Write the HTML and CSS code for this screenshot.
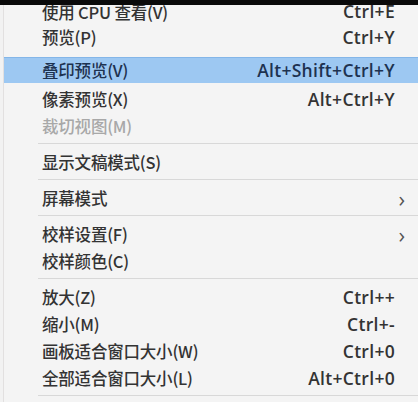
FILE: index.html
```html
<!DOCTYPE html>
<html lang="zh-CN">
<head>
<meta charset="utf-8">
<link rel="stylesheet" href="styles.css">
</head>
<body>
<div class="topbar"></div>
<div class="menu">
  <div class="item first"><span class="label">使用 CPU 查看(V)</span><span class="key">Ctrl+E</span></div>
  <div class="item"><span class="label">预览(P)</span><span class="key">Ctrl+Y</span></div>
  <div class="item active"><span class="label">叠印预览(V)</span><span class="key">Alt+Shift+Ctrl+Y</span></div>
  <div class="item"><span class="label">像素预览(X)</span><span class="key">Alt+Ctrl+Y</span></div>
  <div class="item disabled"><span class="label">裁切视图(M)</span></div>
  <div class="sep"></div>
  <div class="item"><span class="label">显示文稿模式(S)</span></div>
  <div class="sep"></div>
  <div class="item"><span class="label">屏幕模式</span><span class="arrow">›</span></div>
  <div class="sep"></div>
  <div class="item"><span class="label">校样设置(F)</span><span class="arrow">›</span></div>
  <div class="item"><span class="label">校样颜色(C)</span></div>
  <div class="sep"></div>
  <div class="item"><span class="label">放大(Z)</span><span class="key">Ctrl++</span></div>
  <div class="item"><span class="label">缩小(M)</span><span class="key">Ctrl+-</span></div>
  <div class="item"><span class="label">画板适合窗口大小(W)</span><span class="key">Ctrl+0</span></div>
  <div class="item"><span class="label">全部适合窗口大小(L)</span><span class="key">Alt+Ctrl+0</span></div>
  <div class="sep"></div>
</div>
</body>
</html>
```

FILE: styles.css
```css
html, body {
  margin: 0;
  padding: 0;
  background: #f2f2f2;
  width: 418px;
  height: 402px;
  overflow: hidden;
}
body {
  position: relative;
  font-family: "Open Sans", "Noto Sans CJK SC", sans-serif;
  color: #333333;
}
.topbar {
  position: absolute;
  left: 0;
  top: 0;
  width: 418px;
  height: 5px;
  background: #0a0a0a;
  z-index: 2;
}
.menu {
  margin-left: 3px;
  border-left: 1px solid #e2e0e0;
  background: #f4f4f4;
  height: 402px;
}
.item {
  height: 27px;
  display: flex;
  align-items: center;
  padding-left: 38px;
  padding-right: 23px;
  font-size: 16.5px;
  line-height: 1;
}
.item.first {
  height: 24px;
}
.label {
  flex: 1;
  font-family: "Noto Sans CJK SC", sans-serif;
  font-weight: 500;
  letter-spacing: -0.2px;
}
.key {
  font-size: 17.5px;
  font-weight: 600;
  letter-spacing: 0.3px;
}
.arrow {
  font-size: 22px;
  color: #555;
  margin-right: -10px;
  line-height: 1;
  transform: translateY(-1px);
}
.item.active {
  margin-top: 6px;
  margin-bottom: 3px;
  height: 26px;
  background: #9dc8f2;
  border-top: 1px solid #84b6e8;
  box-sizing: border-box;
  color: #1d3250;
}
.item.disabled {
  color: #a8a8a8;
}
.sep {
  height: 1px;
  margin: 3px 0 5px 34px;
  background: #d8d8d8;
}
```
